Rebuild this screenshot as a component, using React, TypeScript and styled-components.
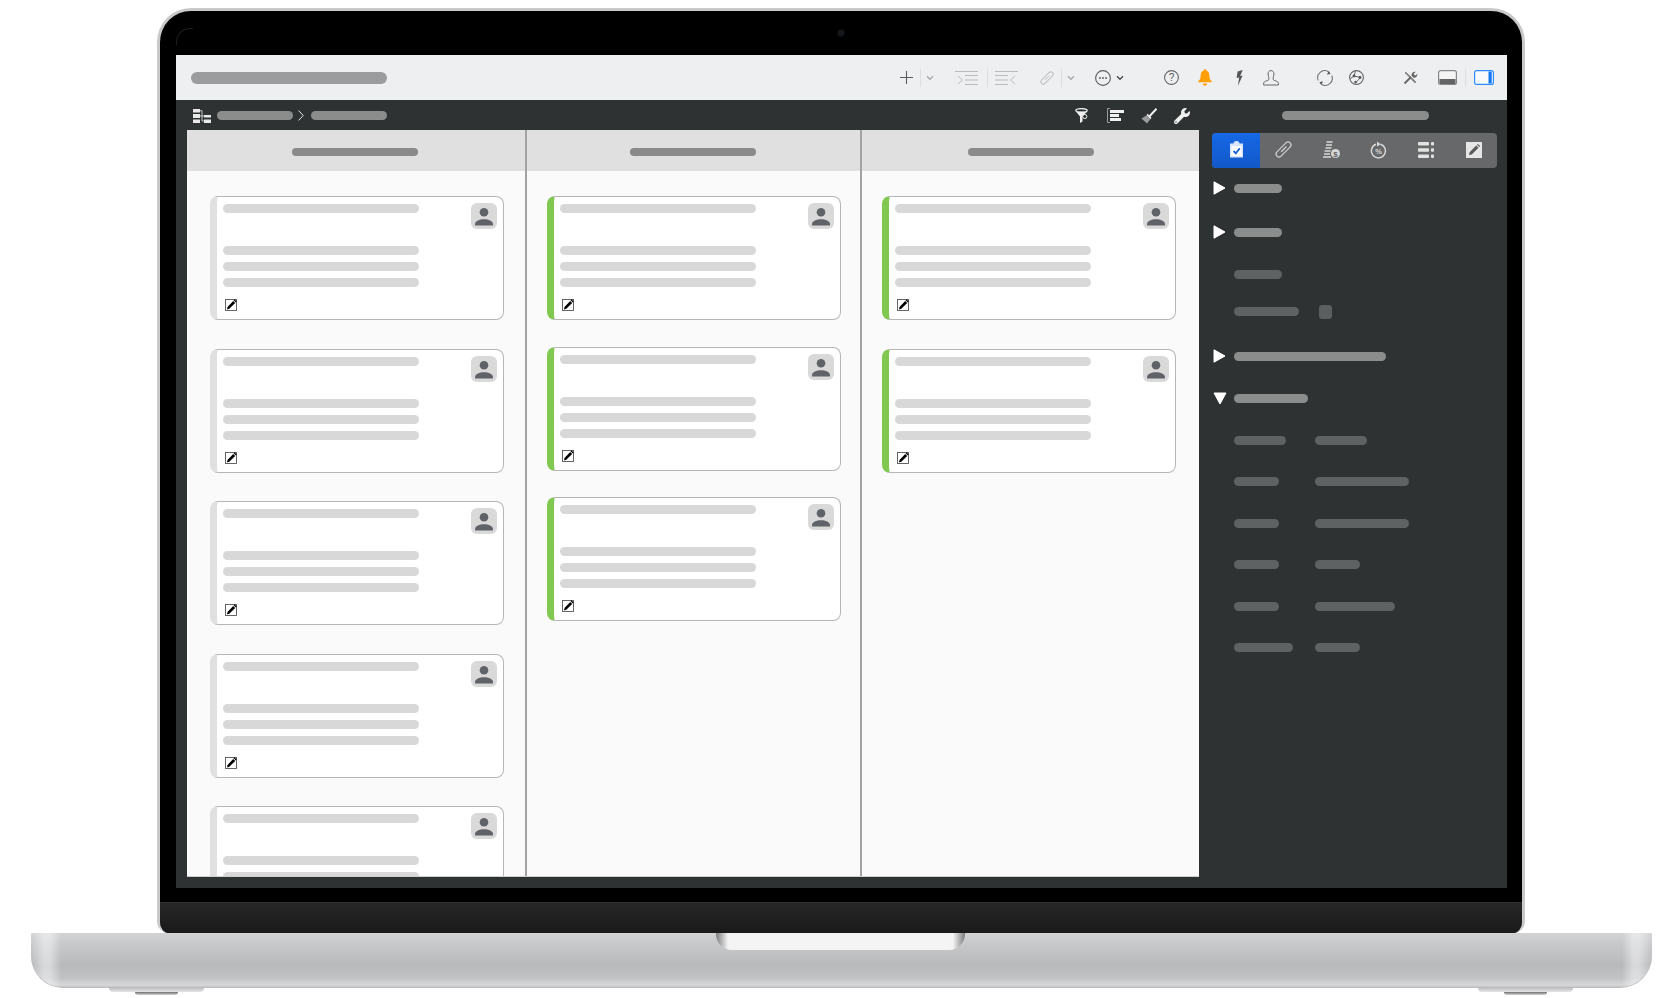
import React from 'react'
import styled, { createGlobalStyle } from 'styled-components'
import { FaWrench } from 'react-icons/fa'

const GlobalStyle = createGlobalStyle`
    html, body {
        margin: 0;
        padding: 0;
        background: #fff;
        font-family: "Liberation Sans", Arial, sans-serif;
    }
    * { box-sizing: border-box; }
`

const Stage = styled.div`
    width: 1678px;
    height: 998px;
    overflow: hidden;
    padding: 8px 0 0 31px;
    display: flex;
    flex-direction: column;
`

const Lid = styled.div`
    width: 1368px;
    height: 925px;
    margin-left: 126px;
    background: #000;
    border: 3px solid #c8c9cb;
    border-bottom: 0;
    border-radius: 34px 34px 12px 12px;
    display: flex;
    flex-direction: column;
    overflow: hidden;
`

const CameraBand = styled.div`
    height: 44px;
    flex-shrink: 0;
    display: flex;
    align-items: center;
    justify-content: center;
    position: relative;

    &::before {
        content: '';
        position: absolute;
        left: 16px;
        top: 17px;
        width: 16px;
        height: 16px;
        border-top: 1px solid #1e1e1e;
        border-left: 1px solid #1e1e1e;
        border-top-left-radius: 14px;
    }
`

const Camera = styled.div`
    width: 6px;
    height: 6px;
    border-radius: 50%;
    background: #14171b;
    box-shadow: 0 0 0 1px #0a0b0d;
`

const Screen = styled.div`
    height: 833px;
    margin: 0 15px 0 16px;
    flex-shrink: 0;
    background: #2e3233;
    display: flex;
    flex-direction: column;
`

const Chin = styled.div`
    height: 31px;
    margin-top: 14px;
    flex-shrink: 0;
    border-top: 1px solid #2c2c2c;
    background: linear-gradient(180deg, #272727 0%, #1a1a1a 100%);
`

const Base = styled.div`
    width: 1621px;
    height: 55px;
    flex-shrink: 0;
    border-radius: 1px 1px 32px 32px;
    display: flex;
    justify-content: center;
    border-bottom: 1px solid #bcbcbe;
    background:
        linear-gradient(90deg,
            rgba(255,255,255,0) 0,
            rgba(255,255,255,.45) 13px,
            rgba(255,255,255,.45) 19px,
            rgba(255,255,255,0) 30px,
            rgba(255,255,255,0) calc(100% - 30px),
            rgba(255,255,255,.45) calc(100% - 19px),
            rgba(255,255,255,.45) calc(100% - 13px),
            rgba(255,255,255,0) 100%),
        linear-gradient(180deg, #d2d3d5 0%, #c6c7c9 25%, #b8b9bb 60%, #c2c3c5 84%, #d6d7d9 96%, #c6c7c9 100%);
`

const Notch = styled.div`
    width: 249px;
    height: 17px;
    margin-right: 2px;
    border-radius: 0 0 16px 16px;
    background: linear-gradient(90deg, #7c7c7c 0, #f4f4f4 12px, #f4f4f4 calc(100% - 12px), #7c7c7c 100%);
`

const FeetRow = styled.div`
    width: 1621px;
    padding: 0 79px 0 78px;
    display: flex;
    justify-content: space-between;
`

const Foot = styled.div`
    width: 95px;
    height: 4px;
    border-radius: 0 0 6px 6px;
    background: linear-gradient(180deg, #c0c0c2, #e6e6e8);
    display: flex;
    justify-content: center;
`

const FootShadow = styled.div`
    width: 43px;
    height: 3px;
    margin-top: 4px;
    flex-shrink: 0;
    border-radius: 0 0 6px 6px;
    background: linear-gradient(180deg, #6e6e70, #d5d5d5);
`

const Toolbar = styled.div`
    height: 45px;
    flex-shrink: 0;
    background: #eeeff1;
    display: flex;
    align-items: center;
    padding: 0 13px 0 15px;
`

const Tool = styled.span<{ $ml?: number }>`
    display: flex;
    flex-shrink: 0;
    margin-left: ${({ $ml }) => $ml ?? 0}px;
`

const ToolsStart = styled(Tool)`
    margin-left: auto;
`

const ToolSep = styled.span<{ $ml: number }>`
    width: 1px;
    height: 18px;
    flex-shrink: 0;
    background: #dcdde0;
    margin-left: ${({ $ml }) => $ml}px;
`

const Pill = styled.span<{ $w: number }>`
    display: block;
    flex-shrink: 0;
    width: ${({ $w }) => $w}px;
`

const TitlePill = styled(Pill)`
    height: 12px;
    border-radius: 6px;
    background: #9b9c9e;
`

const PathBar = styled.div`
    height: 30px;
    flex-shrink: 0;
    display: flex;
    align-items: center;
    padding: 1px 78px 0 17px;
`

const CrumbPill = styled(Pill)<{ $ml: number }>`
    height: 9px;
    border-radius: 5px;
    background: #8b8d8d;
    margin-left: ${({ $ml }) => $ml}px;
`

const Body = styled.div`
    flex: 1;
    min-height: 0;
    display: flex;
`

const Board = styled.div`
    width: 1012px;
    height: 747px;
    margin-left: 11px;
    flex-shrink: 0;
    display: flex;
    overflow: hidden;
    background: #fafafa;
    border-bottom: 1px solid #cfcfcf;
`

const Column = styled.div<{ $w: number; $left: number; $gap: number }>`
    width: ${({ $w }) => $w}px;
    flex-shrink: 0;
    display: flex;
    flex-direction: column;
    gap: ${({ $gap }) => $gap}px;
    padding-left: ${({ $left }) => $left}px;
    overflow: hidden;
    border-right: 2px solid #a2a3a3;

    &:last-child { border-right: 0; }
`

const ColumnHead = styled.div<{ $left: number; $tail: number; $shift: number }>`
    height: 41px;
    flex-shrink: 0;
    margin-left: -${({ $left }) => $left}px;
    margin-bottom: -${({ $tail }) => $tail}px;
    padding: 2px ${({ $shift }) => $shift}px 0 0;
    display: flex;
    align-items: center;
    justify-content: center;
    background: #e0e0e0;
`

const HeadPill = styled(Pill)`
    height: 8px;
    border-radius: 4px;
    background: #8a8a8a;
`

const Card = styled.div<{ $w: number; $done?: boolean }>`
    width: ${({ $w }) => $w}px;
    height: 124px;
    flex-shrink: 0;
    display: flex;
    flex-direction: column;
    padding: 7px 6px 0 6px;
    background: #fff;
    border: 1px solid #b6b6b6;
    border-left: 7px solid ${({ $done }) => ($done ? '#80c850' : '#e0e0e0')};
    border-radius: 8px;
`

const CardHead = styled.div`
    height: 42px;
    flex-shrink: 0;
    display: flex;
    justify-content: space-between;
    align-items: flex-start;
`

const CardLine = styled(Pill)`
    width: 196px;
    height: 9px;
    border-radius: 5px;
    background: #d8d8d8;
`

const CardLines = styled.div`
    display: flex;
    flex-direction: column;
    gap: 7px;
`

const Avatar = styled.div`
    width: 26px;
    height: 26px;
    margin-top: -1px;
    border-radius: 6px;
    background: #d9d9d9;
    display: flex;
`

const CardEdit = styled.span`
    display: flex;
    margin: 12px 0 0 2px;
`

const Side = styled.div`
    flex: 1;
    min-width: 0;
    padding: 3px 10px 0 13px;
`

const Segments = styled.div`
    height: 35px;
    display: flex;
    border-radius: 4px;
    overflow: hidden;
    background: #676869;
`

const Segment = styled.div<{ $active?: boolean }>`
    flex: 1;
    display: flex;
    align-items: center;
    justify-content: center;
    padding: 0 0 2px 1px;
    background: ${({ $active }) => ($active ? 'linear-gradient(180deg, #1668e6, #1258c8)' : 'transparent')};
`

const SideRow = styled.div<{ $top: number }>`
    height: 14px;
    margin-top: ${({ $top }) => $top}px;
    display: flex;
    align-items: center;
    padding-left: 1px;
`

const Arrow = styled.span`
    width: 21px;
    height: 14px;
    flex-shrink: 0;
    display: flex;
`

const SideLabel = styled(Pill)<{ $dim?: boolean }>`
    height: 9px;
    border-radius: 5px;
    background: ${({ $dim }) => ($dim ? '#5f6263' : '#8b8d8d')};
`

const FieldName = styled.span`
    width: 81px;
    flex-shrink: 0;
`

const Swatch = styled.span`
    width: 13px;
    height: 14px;
    margin-left: 20px;
    border-radius: 3px;
    background: #5c5f60;
`

// toolbar drawings
const Plus = () => (
    <svg width="13" height="13" viewBox="0 0 13 13"><path d="M6.5 0v13M0 6.5h13" stroke="#5c5c5c" strokeWidth="1.1" /></svg>
)

const Caret = ({ color }: { color: string }) => (
    <svg width="8" height="6" viewBox="0 0 8 6"><path d="M1 1.2l3 3 3-3" fill="none" stroke={color} strokeWidth="1.4" /></svg>
)

const Indent = ({ flip }: { flip?: boolean }) => (
    <svg width="23" height="14" viewBox="0 0 23 14" style={flip ? { transform: 'scaleX(-1)' } : undefined}>
        <path d="M0 .5h23M10 4.5h13M10 9h13M10 13.5h13M3 5l4.5 4L3 13" fill="none" stroke="#b9babc" strokeWidth="1" />
    </svg>
)

const Capsule = ({ size, color, bg }: { size: number; color: string; bg: string }) => (
    <svg width={size} height={size} viewBox="0 0 17 17" fill="none" strokeLinecap="round">
        <path d="M4 13L13 4" stroke={color} strokeWidth="7" />
        <path d="M4 13L13 4" stroke={bg} strokeWidth="4.6" />
        <path d="M6.500 10.500L11 6" stroke={color} strokeWidth="1.200" />
    </svg>
)

const More = () => (
    <svg width="16" height="16" viewBox="0 0 16 16">
        <circle cx="8" cy="8" r="7.4" fill="none" stroke="#5c5c5c" strokeWidth="1.1" />
        <path d="M4.2 8h1.6M7.2 8h1.6M10.2 8h1.6" stroke="#444" strokeWidth="1.6" />
    </svg>
)

const Help = () => (
    <svg width="15" height="15" viewBox="0 0 15 15">
        <circle cx="7.5" cy="7.5" r="6.9" fill="none" stroke="#666" strokeWidth="1.1" />
        <text x="7.5" y="11" textAnchor="middle" fontSize="10" fontFamily="Liberation Sans, sans-serif" fill="#555">?</text>
    </svg>
)

const Bell = () => (
    <svg width="14" height="17" viewBox="0 0 14 17">
        <path d="M7 .3c.8 0 1.2.5 1.2 1.2 2.5.6 3.2 2.7 3.2 5.2 0 3 .9 4.3 2.4 5.6v1H.2v-1c1.500-1.300 2.400-2.600 2.400-5.600 0-2.500.700-4.600 3.200-5.200C5.800.8 6.200.3 7 .300zM4.800 14.500h4.400a2.200 2.200 0 0 1-4.400 0z" fill="#ff9f0a" />
    </svg>
)

const Bolt = () => (
    <svg width="7" height="16" viewBox="0 0 7 16"><path d="M6.800 0L1.600 1.600.6 8l2.500-.6L2 15.800 6.600 5.400 4.100 6z" fill="#555" /></svg>
)

const Stamp = () => (
    <svg width="16" height="16" viewBox="0 0 16 16">
        <path d="M8 .6C6 .6 5 2.200 5 4c0 2 1 3 1 4.800 0 1.400-1.800 1.800-3.400 2.400-1.200.4-2 1.200-2 2.200v1.600h14.800v-1.600c0-1-.8-1.800-2-2.200-1.600-.6-3.400-1-3.400-2.400C10 7 11 6 11 4c0-1.800-1-3.400-3-3.400z" fill="none" stroke="#666" strokeWidth="1" />
    </svg>
)

const Sync = () => (
    <svg width="16" height="16" viewBox="0 0 16 16">
        <path d="M1.300 10.500A7 7 0 0 1 11.500 1.800M14.700 5.500A7 7 0 0 1 4.500 14.200" fill="none" stroke="#777" strokeWidth="1.1" />
        <path d="M13.600 3.900l-3.700.6 1.900-3.400zM2.400 12.100l3.700-.6-1.900 3.400z" fill="#555" />
    </svg>
)

const Pie = () => (
    <svg width="15" height="15" viewBox="0 0 15 15">
        <circle cx="7.500" cy="7.500" r="6.900" fill="none" stroke="#666" strokeWidth="1.100" />
        <path d="M6.500 1l-1.500 5 6.500 1.500L6 13.500M5 6L1 9" fill="none" stroke="#666" strokeWidth="1" />
        <circle cx="5" cy="6" r="1.400" fill="#555" />
        <circle cx="11" cy="7.500" r="1.400" fill="#555" />
        <circle cx="6.500" cy="12" r="1.200" fill="#555" />
    </svg>
)

const Tools = () => (
    <svg width="15" height="15" viewBox="0 0 15 15">
        <path d="M1.800 1.800l1.500.4 10 9.800-1.300 1.300-9.800-10z" fill="#7a7a7a" />
        <path d="M1.500 13.500L8 7" stroke="#666" strokeWidth="1.800" />
        <path d="M8.500 5.500c-.2-2.400 1.900-4.200 4.300-3.700L10.800 3.800l.5 1.300 1.300.5 1.800-1.900c.4 2.400-1.500 4.300-3.900 4z" fill="#666" />
    </svg>
)

const BottomPanel = () => (
    <svg width="19" height="15" viewBox="0 0 19 15">
        <rect x=".6" y=".6" width="17.800" height="13.800" rx="2" fill="#f4f4f5" stroke="#868789" strokeWidth="1.200" />
        <path d="M1.500 9h16v4a1 1 0 0 1-1 1h-14a1 1 0 0 1-1-1z" fill="#636466" />
    </svg>
)

const RightPanel = () => (
    <svg width="20" height="15" viewBox="0 0 20 15">
        <rect x=".6" y=".6" width="18.800" height="13.800" rx="2" fill="#f8f9fb" stroke="#2f8cff" strokeWidth="1.200" />
        <rect x="14.500" y="1.500" width="3.200" height="12" fill="#1577f0" />
    </svg>
)

// path bar drawings
const Tree = () => (
    <svg width="18" height="14" viewBox="0 0 18 14" fill="#e8e8e8">
        <rect x="0" y="0" width="7" height="3.500" />
        <rect x="0" y="5" width="7" height="4" />
        <rect x="0" y="10.500" width="7" height="3.500" />
        <rect x="11" y="6" width="7" height="2.500" />
        <rect x="11" y="10.500" width="7" height="3.500" />
        <path d="M7 1.700h2V12h2M7 7h4" fill="none" stroke="#e8e8e8" strokeWidth=".8" />
    </svg>
)

const Chevron = () => (
    <svg width="6" height="11" viewBox="0 0 6 11"><path d="M.6.6l4.600 4.900L.6 10.400" fill="none" stroke="#e8e8e8" strokeWidth="1" /></svg>
)

const Funnel = () => (
    <svg width="13" height="15" viewBox="0 0 13 15">
        <ellipse cx="6.500" cy="2.500" rx="5.700" ry="1.900" fill="#2e3233" stroke="#f0f0f0" strokeWidth="1.300" />
        <path d="M1 3.500L5 8.500V15l2.500-1.500V8.500L12 3.500z" fill="#f0f0f0" />
        <circle cx="9.800" cy="8.500" r="2.100" fill="#2e3233" stroke="#f0f0f0" strokeWidth="1" />
    </svg>
)

const AlignBars = () => (
    <svg width="17" height="15" viewBox="0 0 17 15">
        <path d="M3 .5H.5v14H3" fill="none" stroke="#9a9c9c" strokeWidth="1" />
        <rect x="3" y="2" width="14" height="3" fill="#f0f0f0" />
        <rect x="3" y="6" width="9" height="3" fill="#f0f0f0" />
        <rect x="3" y="10" width="11" height="3" fill="#f0f0f0" />
    </svg>
)

const Brush = () => (
    <svg width="16" height="16" viewBox="0 0 16 16">
        <path d="M15.500.8L8.500 8.200" stroke="#f0f0f0" strokeWidth="2" />
        <path d="M6.500 5.800l3.900 3.900-1 1.500-3.900-3.900z" fill="#f0f0f0" />
        <path d="M5.400 7.500l3.900 3.800L6 15.500 .5 10.600z" fill="#9b9d9d" />
    </svg>
)

// sidebar tabs
const Clipboard = () => (
    <svg width="15" height="17" viewBox="0 0 15 17">
        <path d="M1 2.500h3.500a3 2.500 0 0 1 6 0H14v14H1z" fill="#d6e5fb" />
        <rect x="2.500" y="5" width="10" height="10" fill="#fff" />
        <path d="M4.500 10l2.300 2.300 4-5" fill="none" stroke="#1560d8" strokeWidth="1.800" />
    </svg>
)

const Costs = () => (
    <svg width="17" height="17" viewBox="0 0 17 17">
        <path d="M3.500 1h6M3 4h6M2.500 7h6M1.500 10h6M1 13h6M0 16h8" stroke="#d8d8d8" strokeWidth="1.300" />
        <circle cx="12.500" cy="12.500" r="4.500" fill="#d8d8d8" />
        <text x="12.500" y="15.500" textAnchor="middle" fontSize="8" fontWeight="bold" fontFamily="Liberation Sans, sans-serif" fill="#676869">$</text>
    </svg>
)

const Percent = () => (
    <svg width="17" height="18" viewBox="0 0 17 18">
        <path d="M10.500 3.200A7 7 0 1 1 6 3.300" fill="none" stroke="#d8d8d8" strokeWidth="1.500" />
        <path d="M7 .5l3.800 2.700L7 5.500z" fill="#d8d8d8" />
        <text x="8.500" y="13" textAnchor="middle" fontSize="7.500" fontWeight="bold" fontFamily="Liberation Sans, sans-serif" fill="#d8d8d8">%</text>
    </svg>
)

const ListRows = () => (
    <svg width="16" height="16" viewBox="0 0 16 16" fill="#e2e2e2">
        <rect x="0" y="0" width="11" height="3.400" rx="1" />
        <rect x="13" y="0" width="3" height="3.400" rx="1" />
        <rect x="0" y="6.300" width="11" height="3.400" rx="1" />
        <rect x="13" y="6.300" width="3" height="3.400" rx="1" />
        <rect x="0" y="12.600" width="11" height="3.400" rx="1" />
        <rect x="13" y="12.600" width="3" height="3.400" rx="1" />
    </svg>
)

const Note = () => (
    <svg width="16" height="16" viewBox="0 0 16 16">
        <rect width="16" height="16" fill="#e6e6e6" />
        <path d="M3 13l.6-2.800 6.600-6.700 2.300 2.300-6.700 6.600zM11 2.700l.9-.8 2.200 2.200-.8.900z" fill="#5a5a5a" />
    </svg>
)

// card drawings
const Person = () => (
    <svg width="26" height="26" viewBox="0 0 26 26" fill="#5f6367">
        <circle cx="13" cy="9.300" r="4.300" />
        <path d="M4 22.500v-1.300c0-3.300 4.500-5 9-5s9 1.700 9 5v1.300z" />
    </svg>
)

const EditMark = () => (
    <svg width="12" height="12" viewBox="0 0 12 12">
        <rect x=".5" y=".5" width="11" height="11" fill="#fff" stroke="#555" strokeWidth=".9" />
        <path d="M2 10.400l.5-2.300 5.700-6 2 1.900-5.900 5.800z" fill="#000" />
        <path d="M9 .8l2.300 2.200" stroke="#000" strokeWidth="1.200" />
    </svg>
)

const TaskCard = ({ width, done }: { width: number; done?: boolean }) => (
    <Card $w={width} $done={done}>
        <CardHead>
            <CardLine $w={196} />
            <Avatar><Person /></Avatar>
        </CardHead>
        <CardLines>
            <CardLine $w={196} />
            <CardLine $w={196} />
            <CardLine $w={196} />
        </CardLines>
        <CardEdit><EditMark /></CardEdit>
    </Card>
)

const columns = [
    { width: 340, left: 23, gap: 28.5, cardWidth: 294, done: false, cards: 5, shift: 2 },
    { width: 335, left: 20, gap: 26.5, cardWidth: 294, done: true, cards: 3, shift: 2 },
    { width: 337, left: 20, gap: 28.5, cardWidth: 294, done: true, cards: 2, shift: 0 },
]

const PlayArrow = ({ down }: { down?: boolean }) => (
    <svg width="14" height="14" viewBox="0 0 14 14">
        {down
            ? <path d="M1 2h12L7 13z" fill="#fff" stroke="#fff" strokeLinejoin="round" />
            : <path d="M1 .8L12 7 1 13.200z" fill="#fff" stroke="#fff" strokeLinejoin="round" />}
    </svg>
)

const fieldRows = [
    { top: 28, name: 52, value: 52 },
    { top: 27.5, name: 45, value: 94 },
    { top: 27.5, name: 45, value: 94 },
    { top: 27, name: 45, value: 45 },
    { top: 28, name: 45, value: 80 },
    { top: 27.5, name: 59, value: 45 },
]

export default function App() {
    return (
        <Stage>
            <GlobalStyle />
            <Lid>
                <CameraBand><Camera /></CameraBand>
                <Screen>
                    <Toolbar>
                        <TitlePill $w={196} />
                        <ToolsStart><Plus /></ToolsStart>
                        <ToolSep $ml={6.5} />
                        <Tool $ml={5.5}><Caret color="#a9aaac" /></Tool>
                        <Tool $ml={21}><Indent /></Tool>
                        <ToolSep $ml={8.5} />
                        <Tool $ml={7.5}><Indent flip /></Tool>
                        <Tool $ml={22}><Capsule size={14} color="#bcbdbf" bg="#eeeff1" /></Tool>
                        <ToolSep $ml={6.5} />
                        <Tool $ml={5.5}><Caret color="#a9aaac" /></Tool>
                        <Tool $ml={20}><More /></Tool>
                        <Tool $ml={5}><Caret color="#4a4a4a" /></Tool>
                        <Tool $ml={40}><Help /></Tool>
                        <Tool $ml={19}><Bell /></Tool>
                        <Tool $ml={24}><Bolt /></Tool>
                        <Tool $ml={20}><Stamp /></Tool>
                        <Tool $ml={38}><Sync /></Tool>
                        <Tool $ml={16}><Pie /></Tool>
                        <Tool $ml={39}><Tools /></Tool>
                        <Tool $ml={20}><BottomPanel /></Tool>
                        <ToolSep $ml={8} />
                        <Tool $ml={8}><RightPanel /></Tool>
                    </Toolbar>
                    <PathBar>
                        <Tool><Tree /></Tool>
                        <CrumbPill $w={76} $ml={6} />
                        <Tool $ml={5}><Chevron /></Tool>
                        <CrumbPill $w={76} $ml={7} />
                        <ToolsStart><Funnel /></ToolsStart>
                        <Tool $ml={19}><AlignBars /></Tool>
                        <Tool $ml={17}><Brush /></Tool>
                        <Tool $ml={17}><FaWrench size={16} color="#f0f0f0" /></Tool>
                        <CrumbPill $w={147} $ml={92} />
                    </PathBar>
                    <Body>
                        <Board>
                            {columns.map((col, i) => (
                                <Column key={i} $w={col.width} $left={col.left} $gap={col.gap}>
                                    <ColumnHead $left={col.left} $tail={col.gap - 25} $shift={col.shift}>
                                        <HeadPill $w={126} />
                                    </ColumnHead>
                                    {Array.from({ length: col.cards }).map((_, j) => (
                                        <TaskCard key={j} width={col.cardWidth} done={col.done} />
                                    ))}
                                </Column>
                            ))}
                        </Board>
                        <Side>
                            <Segments>
                                <Segment $active><Clipboard /></Segment>
                                <Segment><Capsule size={17} color="#d0d0d0" bg="#676869" /></Segment>
                                <Segment><Costs /></Segment>
                                <Segment><Percent /></Segment>
                                <Segment><ListRows /></Segment>
                                <Segment><Note /></Segment>
                            </Segments>
                            <SideRow $top={13}><Arrow><PlayArrow /></Arrow><SideLabel $w={48} /></SideRow>
                            <SideRow $top={30}><Arrow><PlayArrow /></Arrow><SideLabel $w={48} /></SideRow>
                            <SideRow $top={28}><Arrow /><SideLabel $w={48} $dim /></SideRow>
                            <SideRow $top={23.5}><Arrow /><SideLabel $w={65} $dim /><Swatch /></SideRow>
                            <SideRow $top={30.5}><Arrow><PlayArrow /></Arrow><SideLabel $w={152} /></SideRow>
                            <SideRow $top={28}><Arrow><PlayArrow down /></Arrow><SideLabel $w={74} /></SideRow>
                            {fieldRows.map((row, i) => (
                                <SideRow key={i} $top={row.top}>
                                    <Arrow />
                                    <FieldName><SideLabel $w={row.name} $dim /></FieldName>
                                    <SideLabel $w={row.value} $dim />
                                </SideRow>
                            ))}
                        </Side>
                    </Body>
                </Screen>
                <Chin />
            </Lid>
            <Base><Notch /></Base>
            <FeetRow>
                <Foot><FootShadow /></Foot>
                <Foot><FootShadow /></Foot>
            </FeetRow>
        </Stage>
    )
}
